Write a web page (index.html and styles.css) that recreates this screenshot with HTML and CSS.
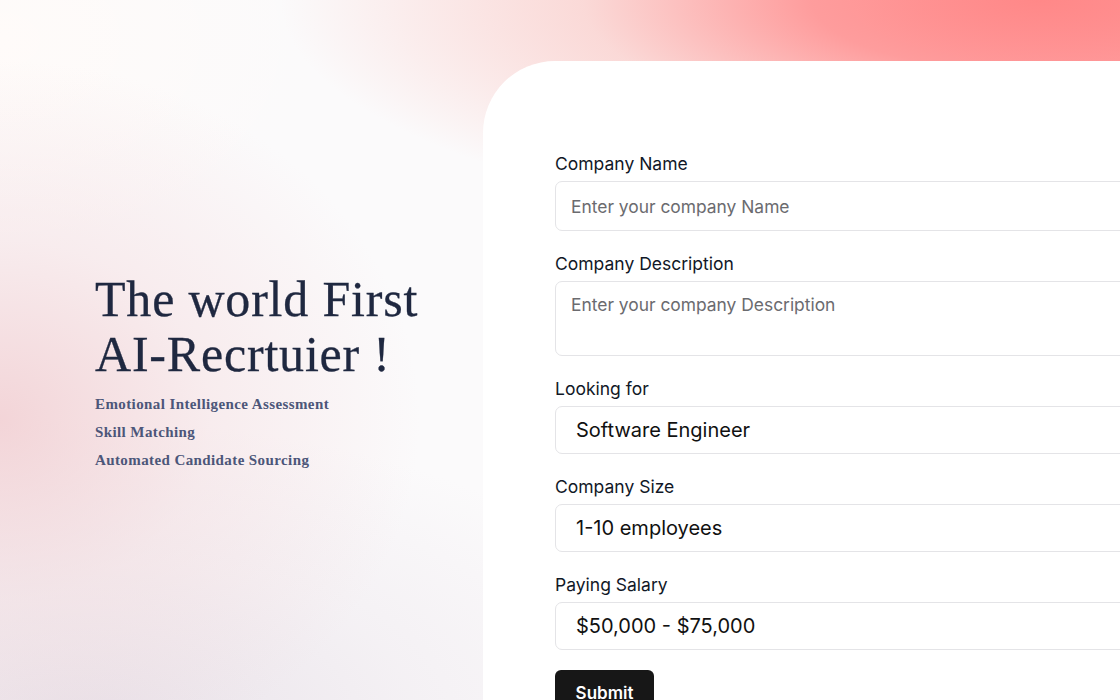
FILE: index.html
```html
<!DOCTYPE html>
<html lang="en">
<head>
<meta charset="utf-8">
<title>AI-Recrtuier</title>
<link rel="stylesheet" href="styles.css">
</head>
<body>
<div class="page">
  <section class="hero">
    <h1 class="hero-title">The world First<br>AI-Recrtuier !</h1>
    <ul class="hero-list">
      <li>Emotional Intelligence Assessment</li>
      <li>Skill Matching</li>
      <li>Automated Candidate Sourcing</li>
    </ul>
  </section>
  <main class="card">
    <form class="form">
      <div class="field">
        <label class="label" for="name">Company Name</label>
        <input class="input" id="name" type="text" placeholder="Enter your company Name">
      </div>
      <div class="field">
        <label class="label" for="desc">Company Description</label>
        <textarea class="input textarea" id="desc" placeholder="Enter your company Description"></textarea>
      </div>
      <div class="field">
        <label class="label" for="role">Looking for</label>
        <select class="input select" id="role">
          <option>Software Engineer</option>
        </select>
      </div>
      <div class="field">
        <label class="label" for="size">Company Size</label>
        <select class="input select" id="size">
          <option>1-10 employees</option>
        </select>
      </div>
      <div class="field">
        <label class="label" for="salary">Paying Salary</label>
        <select class="input select" id="salary">
          <option>$50,000 - $75,000</option>
        </select>
      </div>
      <div class="actions">
        <button class="submit" type="button">Submit</button>
      </div>
    </form>
  </main>
</div>
</body>
</html>
```
FILE: styles.css
```css
* { box-sizing: border-box; }

html, body {
  margin: 0;
  padding: 0;
  height: 700px;
  overflow: hidden;
}

body {
  font-family: Inter, "Noto Sans", sans-serif;
  background-color: #fbfafb;
  background-image:
    radial-gradient(ellipse 760px 240px at 1040px 0px, rgba(255,136,136,1) 0%, rgba(255,140,140,0.85) 30%, rgba(250,185,180,0.5) 60%, rgba(245,215,215,0) 100%),
    radial-gradient(ellipse 260px 120px at 1120px 0px, rgba(255,150,170,0.6) 0%, rgba(255,150,170,0) 100%),
    radial-gradient(ellipse 420px 360px at 0px 420px, rgba(240,200,204,0.75) 0%, rgba(243,215,218,0.4) 50%, rgba(250,245,246,0) 100%),
    radial-gradient(ellipse 620px 300px at 80px 720px, rgba(230,222,230,0.9) 0%, rgba(236,230,236,0.45) 55%, rgba(250,250,250,0) 100%),
    radial-gradient(ellipse 320px 220px at 0px 40px, rgba(255,251,249,1) 0%, rgba(255,251,249,0) 100%);
}

.page {
  display: flex;
  height: 700px;
  width: 1120px;
  overflow: hidden;
}

.hero {
  flex: 0 0 483px;
  padding: 272px 0 0 95px;
}

.hero-title {
  margin: 0;
  font-family: "Liberation Serif", "Times New Roman", serif;
  font-weight: 400;
  font-size: 50px;
  line-height: 55px;
  letter-spacing: 0.8px;
  color: #1f2840;
  -webkit-text-stroke: 0.3px #1f2840;
}

.hero-list {
  list-style: none;
  margin: 8px 0 0;
  padding: 0;
  font-family: "Liberation Serif", "Times New Roman", serif;
  font-weight: 700;
  font-size: 15px;
  line-height: 28px;
  letter-spacing: 0.4px;
  color: #4c5679;
}

.card {
  flex: 0 0 760px;
  margin-top: 61px;
  background: #ffffff;
  border-top-left-radius: 72px;
  padding: 91px 0 0 72px;
}

.form {
  display: flex;
  flex-direction: column;
  gap: 21px;
  width: 640px;
}

.field {
  display: flex;
  flex-direction: column;
  gap: 5px;
}

.label {
  font-size: 17.5px;
  line-height: 24px;
  color: #111827;
}

.input {
  display: block;
  width: 100%;
  height: 50px;
  margin: 0;
  border: 1px solid #e4e4e7;
  border-radius: 7px;
  background: #ffffff;
  font-family: Inter, "Noto Sans", sans-serif;
  font-size: 17.4px;
  color: #111111;
  padding: 0 15px;
  outline: none;
}

.input::placeholder {
  color: #6b6b6f;
  opacity: 1;
}

.textarea {
  height: 75px;
  padding: 12px 15px;
  line-height: 22px;
  resize: none;
}

.select {
  height: 48px;
  appearance: none;
  -webkit-appearance: none;
  font-size: 20px;
  padding: 0 20px;
  color: #111111;
}

.actions {
  display: flex;
  margin-top: -1px;
}

.submit {
  width: 99px;
  height: 46px;
  border: none;
  border-radius: 6px;
  background: #171717;
  color: #ffffff;
  font-family: Inter, "Noto Sans", sans-serif;
  font-weight: 600;
  font-size: 17px;
  padding: 0;
}
```
